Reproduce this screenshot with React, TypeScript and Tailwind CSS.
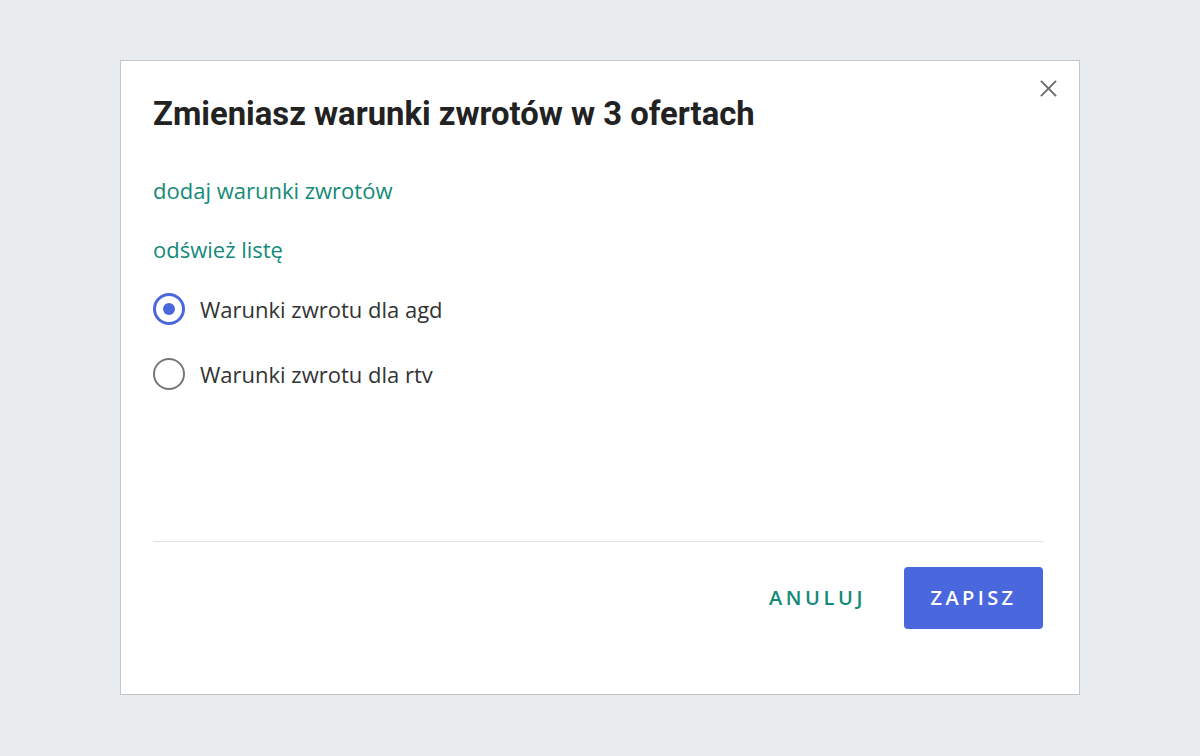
import { useState } from "react";

const options = [
  { id: "agd", label: "Warunki zwrotu dla agd" },
  { id: "rtv", label: "Warunki zwrotu dla rtv" },
];

export default function App() {
  const [selected, setSelected] = useState("agd");

  return (
    <div className="flex h-[756px] w-full items-start justify-center bg-[#e9edf0] pt-[60px] font-['Open_Sans',sans-serif]">
      <div className="relative flex h-[635px] w-[960px] flex-col border border-[#c6c6c6] bg-white pl-[32px] pr-[36px]">
        <button className="absolute right-[20px] top-[16px] flex h-[22px] w-[22px] items-center justify-center text-[#6b6b6b]">
          <svg width="17" height="17" viewBox="0 0 18 18" fill="none" stroke="currentColor" strokeWidth="2">
            <path d="M1 1L17 17M17 1L1 17" />
          </svg>
        </button>

        <h1 className="mt-[33px] font-['Roboto',sans-serif] text-[32.8px] leading-[40px] font-bold text-[#222]">
          Zmieniasz warunki zwrotów w 3 ofertach
        </h1>

        <a className="mt-[41px] text-[22px] leading-[30px] text-[#138a78]" href="#">
          dodaj warunki zwrotów
        </a>
        <a className="mt-[29px] text-[22px] leading-[30px] text-[#138a78]" href="#">
          odśwież listę
        </a>

        <div className="mt-[29px] flex flex-col gap-[33px]">
          {options.map((o) => (
            <label key={o.id} className="flex cursor-pointer items-center gap-[15px]" onClick={() => setSelected(o.id)}>
              {selected === o.id ? (
                <span className="flex h-[32px] w-[32px] items-center justify-center rounded-full border-[3px] border-[#4a67de]">
                  <span className="h-[12px] w-[12px] rounded-full bg-[#4a67de]" />
                </span>
              ) : (
                <span className="h-[32px] w-[32px] rounded-full border-2 border-[#777]" />
              )}
              <span className="text-[22px] leading-[30px] text-[#333]">{o.label}</span>
            </label>
          ))}
        </div>

        <div className="mt-auto border-t border-[#e2e2e2]" />

        <div className="mb-[65px] mt-[25px] flex items-center justify-end gap-[38px]">
          <button className="text-[20px] font-semibold tracking-[0.18em] text-[#138a78]">ANULUJ</button>
          <button className="h-[62px] w-[139px] rounded-[4px] bg-[#4a67de] text-[20px] font-semibold tracking-[0.17em] text-white">
            ZAPISZ
          </button>
        </div>
      </div>
    </div>
  );
}
